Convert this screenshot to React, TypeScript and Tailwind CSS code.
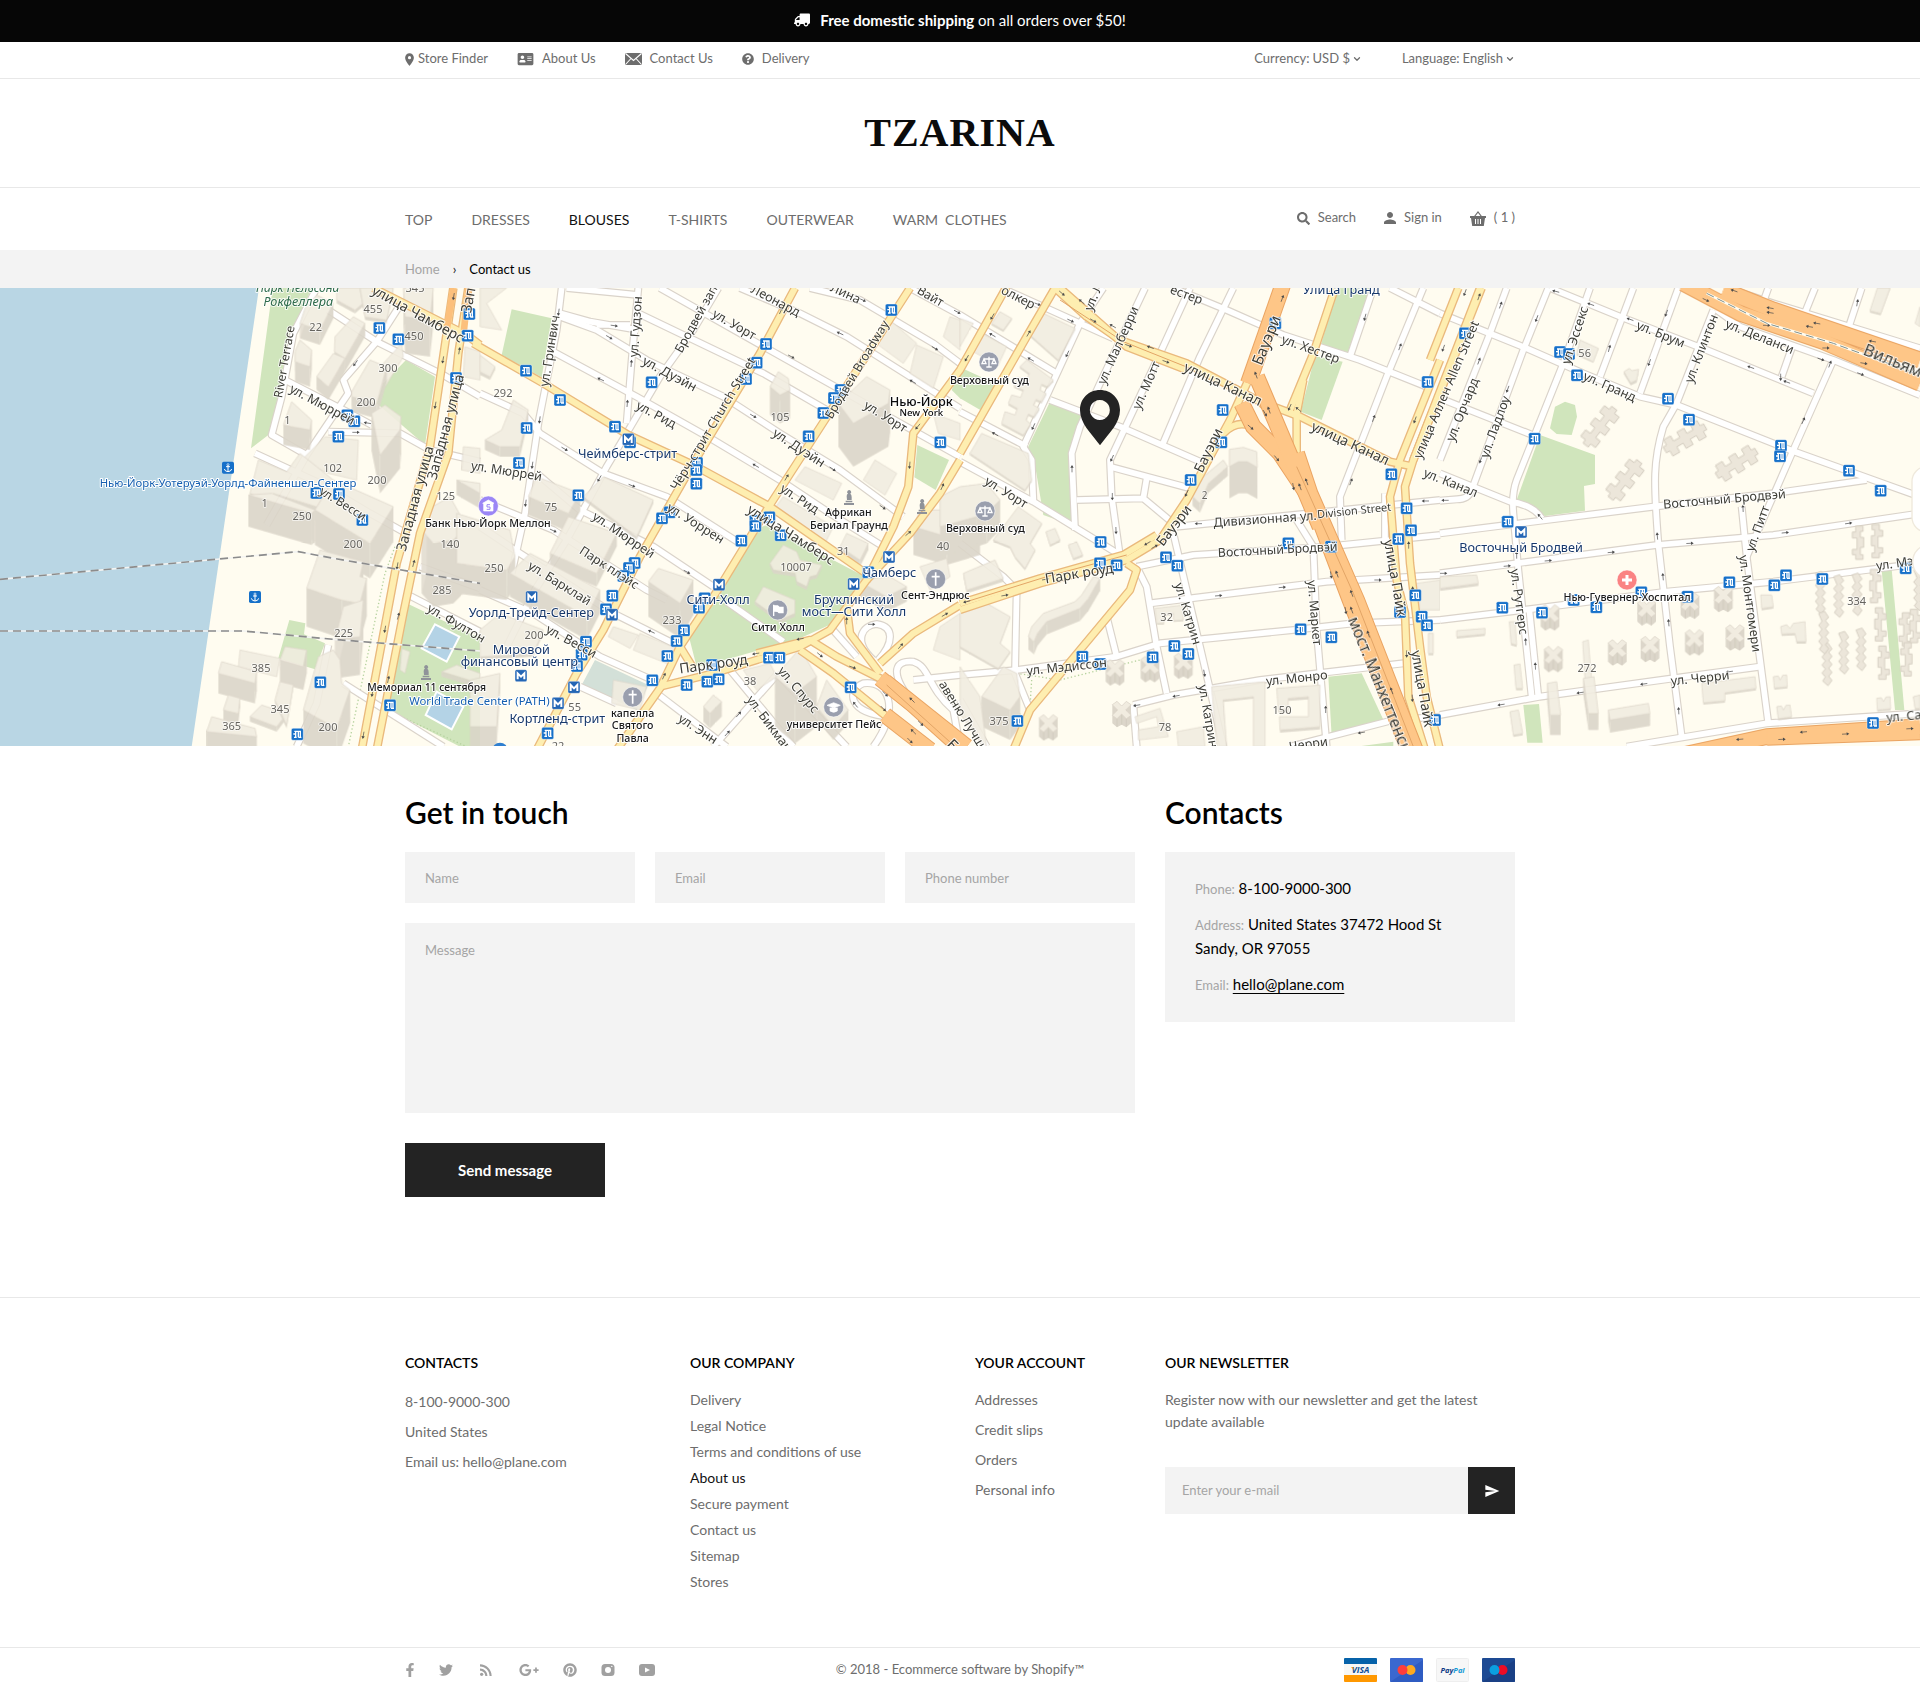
import type { ReactNode } from "react";
import { ChevronDown } from "lucide-react";
import {
  FaAddressCard,
  FaFacebookF,
  FaGooglePlusG,
  FaPinterest,
  FaQuestionCircle,
  FaSearch,
  FaTruck,
  FaTwitter,
} from "react-icons/fa";
import { MdLocationOn, MdPerson, MdRssFeed, MdSend } from "react-icons/md";

/* ------------------------------------------------------------------ */
/* Map data. One tile is 1440 units wide, four tiles make the strip.   */
/* ------------------------------------------------------------------ */

type Label = [x: number, y: number, angle: number, size: number, text: string, kind?: string];
type Arrow = [x: number, y: number, angle: number];

interface Tile {
  greens: string[];
  buildings: [points: string, height: number][];
  minor: string[];
  yellow: string[];
  orange: string[];
  stops: [number, number][];
  metro: [number, number][];
  arrows: Arrow[];
  labels: Label[];
}

const tiles: Tile[] = [
  {
    greens: [
      "818,24 935,24 880,150 830,370 805,465 753,505",
      "1218,240 1305,290 1275,495 1130,370 1150,310",
      "868,1020 916,1030 912,1063 975,1090 945,1168 835,1135",
      "1220,970 1440,1075 1440,1400 1380,1400 1165,1290 1180,1130",
    ],
    buildings: [
      ["1010,24 1100,24 1100,60 1065,90 1010,60", 10],
      ["915,85 950,45 1000,70 960,150 900,130", 45],
      ["1005,170 1060,110 1095,130 1035,235 1003,215", 40],
      ["950,290 1000,220 1035,235 985,320", 40],
      ["885,215 900,180 935,210 930,260 885,245", 60],
      ["1080,24 1180,24 1160,120 1095,110", 10],
      ["1210,24 1300,24 1290,120 1215,110", 110],
      ["1150,250 1205,190 1210,230 1150,330 1115,320", 0],
      ["1055,335 1110,240 1160,260 1130,370 1055,350", 45],
      ["1115,400 1155,375 1203,410 1200,450 1140,525", 115],
      ["850,435 875,365 935,420 930,450", 60],
      ["905,540 975,470 1075,480 1070,600 985,580", 0],
      ["750,640 775,540 860,575 900,520 1000,600 950,680 820,640 800,660", 45],
      ["745,645 815,640 945,690 935,700", 95],
      ["945,690 1000,600 1180,680 1110,790", 105],
      ["920,925 960,810 1090,845 1080,890 1100,895 1080,970 1025,960", 115],
      ["1030,980 1090,960 1080,1070 1005,1080", 115],
      ["720,1110 840,1135 830,1190 715,1160", 0],
      ["655,1180 665,1145 770,1175 765,1210", 60],
      ["840,1140 855,1100 920,1110 910,1160", 70],
      ["670,1290 685,1245 720,1255 715,1300", 30],
      ["750,1310 785,1275 860,1300 830,1340", 15],
      ["825,1260 840,1205 880,1215 860,1335", 10],
      ["620,1355 635,1310 765,1345 770,1370", 50],
      ["910,1290 955,1130 1000,1110 1020,1140 1025,1210 1050,1230 1010,1345", 100],
      ["1280,690 1350,650 1400,740 1360,780 1300,790 1265,750", 190],
      ["1370,600 1440,610 1440,640", 45],
      ["1390,500 1440,505 1440,580 1385,570", 0],
      ["1395,200 1440,215 1440,300 1390,290", 0],
      ["1325,1175 1370,1155 1440,1180 1440,1210", 15],
      ["1205,1105 1230,1115 1215,1180 1200,1170", 0],
    ],
    minor: [
      "M950,24 L880,160 L845,350 L815,465 L920,525",
      "M985,90 L1130,185 L1330,285 L1440,350",
      "M1210,60 L1130,185 L1030,300 L1045,340 L920,525 L800,735",
      "M855,300 L1050,400 L1115,435",
      "M985,455 L1200,460 L1290,510 L1440,545",
      "M765,520 L960,610 L1110,700 L1210,755",
      "M1225,945 L1440,1055",
      "M1260,860 L1440,925",
      "M1030,1210 L1330,1400",
      "M985,1095 L950,1270 L890,1400",
    ],
    yellow: [
      "M1360,24 L1290,500 L1190,850 L1085,1410",
      "M1405,24 L1375,220 L1345,520 L1260,760 L1210,1000 L1130,1410",
      "M1120,24 L1400,165 L1440,195",
    ],
    orange: [],
    stops: [[1138, 144], [1195, 178], [1408, 102], [1403, 167], [1368, 294], [1042, 406], [1063, 424], [1015, 470], [949, 639], [1017, 642], [1087, 720], [961, 1207], [1170, 1276], [892, 1363]],
    metro: [],
    arrows: [[1361, 50, 100], [1329, 240, 100], [1306, 376, 100], [1378, 212, -80], [1066, 250, 125], [1102, 429, 190], [1068, 457, 0], [1192, 858, 100], [1241, 850, -75], [1195, 1008, -75], [1155, 1048, 100], [1165, 1198, -78], [1117, 1240, 100], [1090, 1366, 100]],
    labels: [
      [893, 24, 0, 36, "Парк Нельсона", "park"],
      [895, 64, 0, 38, "Рокфеллера", "park"],
      [852, 245, -80, 36, "River Terrace"],
      [968, 372, 28, 38, "ул. Мюррей"],
      [1030, 670, 32, 36, "ул. Весси"],
      [1255, 100, 29, 42, "улица Чамберс"],
      [1335, 440, -75, 42, "Западная улица"],
      [1243, 655, -75, 42, "Западная улица"],
      [1402, 60, -80, 44, "Зап"],
      [684, 608, 0, 34, "Нью-Йорк-Уотеруэй-Уорлд-Файненшел-Сентер", "blue"],
      [1280, 1221, 0, 31, "Мемориал 11 сентября", "dark"],
      [1438, 1262, 0, 34, "World Trade Center (PATH)", "blue"],
      [1370, 1028, 30, 38, "ул. Фултон"],
      [947, 139, 0, 33, "22", "num"], [1119, 87, 0, 33, "455", "num"], [1242, 167, 0, 33, "450", "num"],
      [1245, 24, 0, 33, "345", "num"], [1164, 264, 0, 33, "300", "num"], [1098, 363, 0, 33, "200", "num"],
      [862, 418, 0, 33, "1", "num"], [998, 564, 0, 33, "102", "num"], [1131, 600, 0, 33, "200", "num"],
      [794, 669, 0, 33, "1", "num"], [906, 708, 0, 33, "250", "num"], [1059, 792, 0, 33, "200", "num"],
      [1337, 648, 0, 33, "125", "num"], [1350, 792, 0, 33, "140", "num"], [1326, 930, 0, 33, "285", "num"],
      [1031, 1059, 0, 33, "225", "num"], [783, 1164, 0, 33, "385", "num"], [840, 1287, 0, 33, "345", "num"],
      [695, 1336, 0, 33, "365", "num"], [984, 1341, 0, 33, "200", "num"],
    ],
  },
  {
    greens: [
      "95,88 215,115 185,292 65,225",
      "820,750 860,735 1145,885 1165,900 1060,1030 960,1075 700,1150 650,1160 628,1075 700,960",
      "1312,495 1407,540 1367,630 1303,592",
    ],
    buildings: [
      ["0,24 80,24 20,70 65,150 0,140", 0],
      ["0,225 45,260 30,290 0,275", 10],
      ["15,480 65,450 100,360 145,390 120,500 60,500", 30],
      ["145,650 170,590 300,640 265,700", 55],
      ["310,650 370,590 520,660 470,770", 10],
      ["210,820 265,710 410,760 350,880", 40],
      ["-70,700 90,750 105,830 80,870 -70,850", 90],
      ["90,880 150,820 360,930 320,1010", 70],
      ["505,905 535,865 640,900 600,970", 105],
      ["400,1040 475,1065 450,1105 385,1070", 0],
      ["480,1060 590,1105 560,1150 460,1110", 0],
      ["0,1050 60,1000 190,1050 160,1120 0,1130", 10],
      ["-30,1200 60,1180 50,1340 -30,1340", 60],
      ["400,1200 500,1220 480,1290 395,1270", 0],
      ["870,320 895,275 925,295 930,330 900,345", 85],
      ["1075,370 1160,290 1230,330 1225,370 1120,430", 130],
      ["1175,180 1230,120 1310,190 1270,250", 0],
      ["1310,195 1390,230 1360,325 1290,280", 0],
      ["1390,170 1410,110 1440,120 1440,210", 0],
      ["1360,400 1440,430 1440,480 1375,460", 0],
      ["1150,600 1185,540 1250,580 1215,645", 0],
      ["945,600 975,560 1085,610 1060,660", 0],
      ["880,690 910,650 1060,740 1030,800", 0],
      ["1080,800 1100,760 1165,790 1140,840", 20],
      ["1300,740 1320,690 1500,690 1500,740 1400,770", 85],
      ["870,850 910,795 950,815 960,840 1025,855 1010,885 990,890 980,920 950,905 945,880 880,870", 10],
      ["825,965 850,920 945,960 945,1000 900,1020", 10],
      ["1130,900 1230,890 1280,920 1220,950", 45],
      ["885,1190 960,1105 1010,1190 945,1240", 150],
      ["790,1170 870,1150 890,1190 830,1230", 0],
      ["1010,1280 1040,1200 1105,1290 1060,1340", 40],
      ["670,1280 700,1245 725,1265 690,1300", 45],
      ["1320,860 1400,835 1410,890 1350,930", 0],
      ["1360,1110 1380,1040 1440,1000 1440,1140", 0],
    ],
    minor: [
      "M245,24 L230,150 L175,430 L150,600 L135,700 L95,880",
      "M475,24 L455,240 L440,430",
      "M715,24 L640,150 L540,290 L440,460 L380,560 L260,780 L165,930 L80,1100",
      "M240,100 L330,125 L475,150 M260,24 L475,45 M350,135 L450,135",
      "M540,24 L860,205 L1440,530",
      "M780,24 L960,100 L1100,170 L1290,290 L1440,385",
      "M990,24 L1140,60 L1360,190 L1440,250",
      "M1290,24 L1440,105",
      "M475,100 L850,280 L1040,390",
      "M240,110 L350,150 L500,240 L730,350 L900,460 L1080,570 L1270,710",
      "M220,215 L470,350 L700,480 L900,600 L1050,700 L1210,800",
      "M0,340 L130,400 L180,460 L370,580 L560,650 L780,790",
      "M170,580 L300,690 L520,800 L700,920",
      "M0,660 L220,750 L500,930 L560,960",
      "M0,740 L120,820 L400,1000 L600,1100",
      "M0,930 L160,1000 L360,1130 L540,1210",
      "M300,1220 L410,1270",
      "M530,1240 L740,1400",
      "M750,1170 L940,1400",
      "M890,1180 L1100,1400",
      "M890,1185 L700,1400",
      "M740,965 L910,1085",
      "M1050,1040 L1130,1130",
      "M1180,1140 C1115,1080 1150,1035 1190,1032 C1245,1040 1240,1090 1195,1140",
      "M1300,1270 C1220,1170 1250,1140 1300,1145 C1350,1160 1340,1220 1420,1290 L1440,1400",
      "M1300,1200 L1440,1185",
      "M1230,1310 C1100,1300 1100,1230 1150,1210 C1230,1200 1260,1290 1180,1400",
    ],
    yellow: [
      "M-20,190 L190,310 L445,465 L640,555 L870,680 L1165,885",
      "M1290,24 L860,690 L720,920 L600,1100 L540,1225 L410,1410",
      "M945,24 L840,220 L640,550 L480,830 L370,1050 L290,1180 L170,1410",
      "M600,1100 L640,1165",
      "M540,1220 L700,1180 L960,1100 L1050,1050 L1160,900 L1240,740 L1285,620 L1300,460 L1440,270 L1580,20",
      "M1160,900 L1290,760 L1380,640 L1440,540",
      "M830,1120 L990,1080 L1070,1130 L1210,1200",
      "M960,1110 L1060,1180 L1220,1310",
      "M1100,980 L1110,1060 L1200,1180",
      "M1200,1150 L1300,1060 L1440,975",
    ],
    orange: ["M1200,1195 L1300,1275 L1450,1410", "M1215,1205 L1460,1400", "M1215,1305 L1350,1410"],
    stops: [[138, 272], [240, 360], [140, 444], [405, 440], [450, 487], [515, 307], [117, 549], [295, 646], [858, 192], [830, 248], [798, 297], [1234, 90], [1082, 330], [1062, 354], [1030, 399], [986, 469], [1381, 487], [651, 549], [649, 570], [649, 611], [569, 697], [546, 715], [784, 782], [826, 722], [826, 738], [868, 712], [902, 766], [464, 849], [447, 864], [430, 888], [397, 947], [378, 988], [674, 955], [657, 983], [612, 1051], [590, 1083], [562, 1128], [517, 1201], [620, 1215], [682, 1205], [716, 1198], [696, 1155], [867, 1133], [898, 1133], [1112, 1222], [318, 1085], [305, 1124], [291, 1158], [203, 1360], [1165, 877]],
    metro: [[445, 478], [717, 914], [1121, 912], [1227, 831], [155, 951], [396, 1004], [123, 1187], [282, 1222], [234, 1270]],
    arrows: [[236, 97, 98], [403, 137, 8], [388, 172, 30], [454, 250, -85], [442, 370, -85], [362, 298, 205], [179, 420, 98], [157, 556, 98], [137, 670, 98], [358, 596, 120], [254, 507, 30], [456, 617, 22], [903, 92, -65], [934, 230, 28], [820, 408, 30], [1058, 567, 33], [827, 557, 210], [920, 592, -60], [1080, 160, 205], [1148, 60, 25], [1365, 205, 30], [1298, 305, 210], [1432, 96, 28], [1313, 440, 130], [1289, 556, 95], [1387, 620, -65], [1208, 682, 35], [1285, 760, -40], [220, 752, 25], [621, 876, 28], [514, 1055, 205], [960, 1077, 170], [827, 1121, 170], [1100, 1022, -90], [1175, 1033, 0], [1262, 1098, -50], [1395, 1004, -30], [1020, 1125, 40], [1118, 1162, 20], [1216, 1242, 45], [1296, 1260, -135], [1126, 1274, -130], [1210, 1286, 45], [1322, 1330, 45], [1300, 1355, -135], [1290, 1382, 45], [776, 1303, -48], [742, 1360, -48], [552, 1188, -65]],
    labels: [
      [207, 212, -81, 38, "ул. Гринвич"],
      [465, 140, -86, 38, "ул. Гудзон"],
      [650, 112, -61, 37, "Бродвей зап."],
      [764, 132, 30, 38, "ул. Уорт"],
      [888, 60, 28, 38, "Леонард"],
      [1098, 38, 25, 38, "Лина"],
      [1352, 48, 30, 37, "Вайт"],
      [570, 280, 28, 39, "ул. Дуэйн"],
      [530, 402, 28, 38, "ул. Рид"],
      [958, 502, 33, 39, "ул. Дуэйн"],
      [1218, 408, 32, 38, "ул. Уорт"],
      [960, 655, 33, 38, "ул. Рид"],
      [80, 571, 9, 38, "ул. Мюррей"],
      [648, 728, 32, 38, "ул. Уоррен"],
      [432, 763, 34, 38, "ул. Мюррей"],
      [388, 862, 33, 37, "Парк плэйс"],
      [240, 908, 32, 38, "ул. Барклай"],
      [275, 1082, 28, 38, "ул. Весси"],
      [655, 1345, 33, 38, "ул. Энн"],
      [870, 1330, 53, 38, "ул. Бикман"],
      [957, 1228, 50, 38, "ул. Спурс"],
      [1130, 268, -59, 37, "Бродвей Broadway"],
      [697, 430, -59, 38, "Чёрч-стрит Church Street"],
      [935, 762, 32, 41, "улица Чамберс"],
      [700, 1150, -8, 42, "Парк роуд"],
      [1475, 1450, 45, 46, "Бруклин"],
      [443, 520, 0, 38, "Чеймберс-стрит", "metro"],
      [714, 958, 0, 38, "Сити-Холл", "metro"],
      [1122, 958, 0, 38, "Бруклинский", "metro"],
      [1122, 994, 0, 38, "мост—Сити Холл", "metro"],
      [1228, 877, 0, 38, "Чамберс", "metro"],
      [154, 996, 0, 38, "Уорлд-Трейд-Сентер", "metro"],
      [124, 1107, 0, 38, "Мировой", "metro"],
      [118, 1143, 0, 38, "финансовый центр", "metro"],
      [232, 1314, 0, 38, "Кортленд-стрит", "metro"],
      [1324, 364, 0, 38, "Нью-Йорк", "city"],
      [1324, 398, 0, 29, "New York", "city"],
      [1105, 696, 0, 32, "Африкан", "dark"],
      [1107, 734, 0, 32, "Бериал Граунд", "dark"],
      [894, 1042, 0, 32, "Сити Холл", "dark"],
      [1366, 946, 0, 32, "Сент-Эндрюс", "dark"],
      [458, 1299, 0, 32, "капелла", "dark"],
      [458, 1336, 0, 32, "Святого", "dark"],
      [458, 1374, 0, 32, "Павла", "dark"],
      [1062, 1333, 0, 32, "университет Пейс", "dark"],
      [24, 729, 0, 32, "Банк Нью-Йорк Меллон", "dark"],
      [69, 337, 0, 33, "292", "num"], [213, 681, 0, 33, "75", "num"], [42, 864, 0, 33, "250", "num"],
      [162, 1065, 0, 33, "200", "num"], [576, 1020, 0, 33, "233", "num"], [284, 1281, 0, 33, "55", "num"],
      [234, 1396, 0, 33, "22", "num"], [900, 409, 0, 33, "105", "num"], [1090, 813, 0, 33, "31", "num"],
      [948, 861, 0, 33, "10007", "num"], [810, 1203, 0, 33, "38", "num"], [1389, 796, 0, 33, "40", "num"],
    ],
  },
  {
    greens: [
      "-25,330 0,262 105,310 70,395 0,355",
      "270,365 368,395 325,520 335,735 250,705 225,555 200,510",
      "1130,24 1230,24 1160,228 1080,205",
      "1065,228 1148,245 1085,420 1022,395",
      "1105,1190 1205,1180 1275,1330 1115,1370",
      "1190,1400 1300,1385 1300,1400",
    ],
    buildings: [
      ["0,115 40,130 0,200", 0],
      ["95,130 120,95 155,115 130,150", 6],
      ["205,160 240,95 345,145 295,240", 6],
      ["30,210 65,160 140,200 115,255", 0],
      ["180,260 200,240 280,300 262,320 245,312 240,330 258,340 245,365 228,358 220,375 238,385 222,410 205,402 198,420 212,432 190,465 125,430 135,395 165,405 172,385 145,370 155,345 182,352 190,330 162,318 172,292 200,300 208,280", 6],
      ["30,520 65,460 205,520 215,600 195,630", 6],
      ["-60,650 0,620 80,610 120,660 80,700 50,710 -60,740", 90],
      ["100,780 175,680 245,730 210,790 225,810 195,865 165,830 150,800", 6],
      ["10,880 105,840 130,895 20,930", 10],
      ["258,755 285,745 300,780 270,795", 6],
      ["325,795 350,785 368,825 340,835", 6],
      ["205,1070 215,1040 250,1000 345,965 365,945 400,890 420,895 385,955 360,985 260,1025 232,1060 222,1085", 38],
      ["0,1000 80,970 150,1010 120,1090 150,1115 115,1165 0,1100", 6],
      ["698,650 730,590 790,540 803,560 745,610 720,670", 28],
      ["808,508 850,502 890,515 892,562 862,545 835,545 808,560", 95],
      ["585,985 670,975 670,1020 640,1022 640,1000 612,1005 612,1030 590,1030", 4],
      ["755,1220 915,1205 915,1400 880,1400 880,1250 790,1260 800,1400 770,1400", 6],
      ["950,1225 1080,1215 1080,1340 960,1350 958,1310 1045,1310 1045,1250 985,1255 985,1290 955,1290", 8],
      ["525,1310 600,1285 625,1370 535,1380 535,1350 595,1340 590,1310 530,1330", 0],
      ["650,1355 730,1340 735,1400 655,1400", 0],
      ["65,1250 130,1160 170,1180 180,1250 150,1290", 90],
      ["0,1160 60,1250 80,1400 40,1360 0,1300", 0],
      ["1370,910 1440,900 1440,990 1380,990", 0],
      ["1405,1060 1420,1060 1420,1120 1405,1120", 6],
    ],
    minor: [
      "M0,105 L290,280",
      "M125,24 L360,130 L460,175",
      "M430,24 L360,130 L190,500 L215,540 L220,660",
      "M555,24 L420,310 L360,440 L335,520 L345,750",
      "M690,24 L600,220 L450,540 L455,650 L480,830",
      "M820,24 L720,230 L605,500",
      "M0,395 L200,500",
      "M270,360 L480,440 L720,545",
      "M450,560 L690,625",
      "M350,660 L550,655 L640,730 M560,595 L550,655",
      "M0,545 L220,665 L480,825",
      "M640,24 L800,90 L970,165 L1200,240 L1400,320",
      "M650,740 L1050,700 L1440,660",
      "M530,860 L700,825 L1100,800 L1440,765",
      "M570,970 L1100,905 L1440,885",
      "M0,1185 L170,1170 L470,1130 L600,1090 L1000,1050 L1180,1030 L1440,1020",
      "M520,1275 L640,1245 L900,1200 L1330,1150",
      "M990,1400 L1300,1320 L1440,1310",
      "M640,760 L720,1100 L790,1400",
      "M530,860 L560,920 L590,1100 L620,1240",
      "M520,1275 L530,1400",
      "M1010,720 L1060,800 L1070,1050 L1100,1400",
      "M1390,24 L1280,290 L1140,650 L1145,780",
      "M1240,24 L1170,230",
      "M1290,24 L1440,100",
      "M440,1010 L470,1130",
      "M0,790 L130,890 L170,930 L165,1180 L210,1290",
      "M0,1260 L80,1400",
      "M1275,640 L1275,780",
    ],
    yellow: [
      "M0,520 L200,170 L285,24",
      "M285,24 L380,110 L480,180 L680,250 L900,365 L1020,410 L1290,545 L1360,560",
      "M300,24 L500,200 L680,270",
      "M0,990 L240,910 L500,840 L600,780 L680,660 L810,420 L870,290",
      "M0,970 L240,895 L490,825 L590,765",
      "M1125,24 L1060,220 L990,390",
      "M1030,300 L1010,400 L1010,520",
      "M790,460 Q840,410 890,450",
      "M900,365 Q940,400 960,430",
      "M500,850 L530,870 L510,930 L210,1290 L160,1410",
      "M1440,240 L1320,540 L1290,650 L1310,900 L1335,1000 L1345,1250 L1395,1410",
      "M1560,24 L1360,540 L1335,620 L1350,850 L1380,1100 L1400,1250 L1440,1410",
    ],
    orange: [
      "M970,10 L865,310",
      "M845,370 L880,440 L960,520 L1060,670 L1170,960 L1350,1420",
      "M890,290 L1000,550 L1080,740",
      "M1010,520 L1050,640 L1190,960 L1370,1420",
    ],
    stops: [[946, 130], [788, 390], [784, 487], [692, 600], [422, 786], [420, 850], [470, 856], [618, 832], [652, 857], [985, 790], [1113, 800], [1403, 306], [1294, 583], [1340, 685], [1353, 751], [1315, 777], [1366, 946], [1385, 1010], [1401, 1036], [1320, 996], [1022, 1048], [1114, 1072], [643, 1098], [685, 1122], [578, 1132], [367, 1130], [421, 1152], [172, 1323], [1425, 1320]],
    metro: [],
    arrows: [[97, 110, 120], [20, 235, 120], [97, 165, 210], [232, 72, 20], [306, 40, 40], [332, 122, 25], [365, 65, -140], [206, 160, -60], [212, 238, 210], [322, 222, 115], [400, 122, 30], [458, 138, 210], [506, 197, 20], [571, 202, 200], [618, 245, 20], [220, 440, 115], [105, 462, 210], [336, 566, -90], [456, 535, 115], [457, 650, 90], [468, 752, 88], [967, 55, -70], [888, 285, -110], [927, 390, -110], [915, 400, 60], [872, 442, 40], [950, 535, 50], [989, 382, 115], [1015, 388, -140], [1000, 620, 80], [1020, 620, -110], [1040, 605, -110], [715, 731, 180], [680, 640, 115], [562, 790, 150], [584, 800, -30], [776, 947, -5], [967, 922, -5], [1254, 900, 0], [1113, 885, 80], [1131, 882, -110], [1175, 940, -110], [1157, 992, 80], [1175, 990, -110], [1225, 1062, -110], [1295, 1232, -110], [1241, 415, -70], [1173, 605, -70], [1320, 200, -70], [1215, 112, 105], [1365, 420, 110], [1346, 795, -90], [1340, 1122, 90], [1357, 1255, 88], [1358, 930, -90], [733, 1180, 80], [648, 1248, 170], [530, 1276, 170], [1097, 1288, -90], [1204, 1358, 170], [135, 946, -10], [20, 965, 165], [257, 898, -10], [1396, 663, 180]],
    labels: [
      [176, 50, 27, 38, "олкер"],
      [398, 50, -68, 38, "ул. Л"],
      [472, 195, -66, 38, "ул. Малберри"],
      [557, 315, -66, 38, "ул. Мотт"],
      [680, 42, 20, 38, "естер"],
      [1053, 205, 20, 38, "ул. Хестер"],
      [790, 310, 25, 42, "улица Канал"],
      [1172, 488, 25, 42, "улица Канал"],
      [917, 180, -68, 46, "Бауэри"],
      [743, 510, -64, 42, "Бауэри"],
      [640, 735, -52, 42, "Бауэри"],
      [1457, 328, -67, 38, "улица Аллен Allen Street"],
      [140, 635, 32, 38, "ул. Уорт"],
      [915, 715, -4, 38, "Дивизионная ул."],
      [1182, 690, -6, 33, "Division Street"],
      [953, 808, -3, 37, "Восточный Бродвэй"],
      [357, 878, -9, 42, "Парк роуд"],
      [320, 1158, -6, 38, "ул. Мэдиссон"],
      [686, 1000, 73, 38, "ул. Катрин"],
      [747, 1308, 80, 38, "ул. Катрин"],
      [1066, 998, 85, 38, "ул. Маркет"],
      [1010, 1192, -6, 38, "ул. Монро"],
      [1045, 1390, -8, 38, "Черри"],
      [1308, 893, 80, 42, "улица Пайк"],
      [1390, 1225, 80, 42, "улица Пайк"],
      [1272, 1240, 68, 48, "мост. Манхеттенский"],
      [20, 1320, 58, 38, "авеню Лучшая"],
      [1144, 28, 0, 38, "Улица Гранд", "metro"],
      [88, 299, 0, 32, "Верховный суд", "dark"],
      [76, 745, 0, 32, "Верховный суд", "dark"],
      [734, 645, 0, 30, "2", "num"], [620, 1011, 0, 33, "32", "num"], [117, 1320, 0, 33, "375", "num"],
      [615, 1341, 0, 33, "78", "num"], [966, 1290, 0, 33, "150", "num"],
    ],
  },
  {
    greens: [
      "300,465 465,525 465,612 432,618 435,692 315,708 230,660",
      "345,380 375,365 405,375 411,410 395,465 350,462 330,445",
      "250,1275 297,1272 308,1388 262,1388",
      "1325,870 1355,868 1393,1290 1365,1290",
    ],
    buildings: [
      ["0,890 110,885 115,910 0,925", 8],
      ["50,1052 135,1045 135,1062 50,1070", 6],
      ["208,1025 225,1025 230,1095 213,1090", 6],
      ["222,1155 240,1152 248,1225 228,1225", 6],
      ["210,1295 235,1290 248,1360 220,1365", 6],
      ["322,1210 350,1205 362,1305 330,1305", 60],
      ["428,1085 445,1080 455,1200 435,1200", 0],
      ["430,1195 462,1190 475,1300 445,1300", 50],
      ["505,1290 625,1270 630,1300 510,1320", 38],
      ["785,1210 945,1190 948,1225 855,1238 855,1262 790,1268", 6],
      ["962,945 995,945 1000,980 965,985", 6],
      ["1022,1040 1040,1034 1050,1045 1060,1030 1095,1025 1098,1085 1070,1085 1065,1060 1025,1062", 6],
      ["552,275 568,265 575,272 596,268 590,300 572,308", 8],
      ["420,180 475,205 460,245 410,222", 4],
      ["1312,24 1350,24 1322,100 1290,92", 6],
      ["1440,80 1425,130 1440,140", 0],
      ["1000,1190 1015,1188 1020,1200 1028,1186 1040,1185 1042,1220 1003,1224", 5],
      ["1010,1280 1024,1278 1030,1290 1038,1276 1050,1275 1055,1310 1015,1316", 5],
      ["1310,1255 1324,1253 1330,1265 1338,1251 1350,1250 1352,1286 1312,1290", 5],
      ["1420,1250 1440,1245 1440,1285 1425,1285", 5],
    ],
    minor: [
      "M0,100 L260,205 L430,280 L600,350 L710,375 L1050,510 L1300,600 L1440,650",
      "M330,24 L540,110 L800,210 L1120,340",
      "M0,355 L290,470",
      "M200,24 L150,160 L0,540",
      "M325,24 L250,210 L95,630 Q85,658 50,658 L0,662",
      "M450,24 L370,250 L230,600 Q215,640 220,700 L235,870 L275,1250",
      "M268,990 L295,1250",
      "M580,24 L480,290",
      "M715,24 L600,340",
      "M820,90 L710,370 L670,440 C640,540 640,600 655,790 L690,1100 L725,1370",
      "M1180,240 L1060,510 L920,830",
      "M905,680 L920,830 L985,1330",
      "M0,760 L640,680 L1000,640 L1280,600",
      "M0,580 L210,665 Q280,675 305,715",
      "M0,880 L650,795 L1000,765 L1440,700",
      "M0,1020 L290,985 L680,935 L1000,905 L1440,850",
      "M0,1305 L300,1250 L700,1195 L960,1160",
      "M560,1400 L980,1330 L1440,1300",
      "M860,24 L1000,70 L1440,205",
      "M830,90 L900,140 L1180,240 L1440,345",
      "M1060,190 L1025,290",
      "M985,24 L970,65",
      "M1125,24 L1090,110",
      "M1265,24 L1220,160",
    ],
    yellow: ["M55,24 L-30,240", "M125,24 L-80,540"],
    orange: [
      "M850,30 L1000,90 L1440,240",
      "M730,10 L900,100 L1150,185 L1440,310",
      "M680,1435 L980,1370 L1440,1340",
      "M980,1372 L1440,1356",
    ],
    stops: [[75, 160], [360, 216], [387, 222], [411, 286], [684, 356], [747, 419], [284, 476], [1023, 497], [1020, 529], [1227, 572], [1322, 632], [203, 725], [187, 983], [306, 998], [401, 960], [469, 982], [604, 937], [743, 950], [868, 907], [1003, 916], [1038, 886], [1147, 897], [1397, 865], [1299, 1329]],
    metro: [[243, 756]],
    arrows: [[75, 38, 110], [117, 50, -70], [182, 75, -70], [10, 205, 110], [117, 243, -70], [290, 116, 110], [203, 328, 110], [122, 540, 110], [347, 34, 195], [452, 73, 200], [570, 118, 200], [508, 205, -75], [628, 248, 110], [679, 100, 110], [932, 262, 200], [1040, 306, 200], [1022, 292, 90], [1090, 422, -65], [1170, 252, -70], [798, 60, 25], [882, 32, 200], [980, 136, 0], [990, 84, 190], [990, 98, 190], [1108, 140, 190], [1130, 130, 190], [1158, 204, 0], [1143, 238, 20], [1262, 282, 20], [1272, 250, 10], [1297, 184, 190], [1252, 68, -80], [15, 661, 180], [300, 710, -130], [230, 825, -90], [11, 880, 0], [202, 858, -5], [325, 842, -5], [514, 817, -5], [750, 790, -3], [1036, 758, -6], [1226, 730, -8], [652, 768, -95], [669, 890, -95], [686, 1028, -95], [716, 1292, -93], [909, 685, -93], [257, 1085, -93], [286, 1158, -93], [183, 1274, 172], [420, 1238, 172], [611, 1212, 172], [868, 1175, 172], [899, 1378, 175], [1026, 1378, -3], [1090, 1356, 175], [1217, 1362, -3], [1410, 1346, -3]],
    labels: [
      [65, 388, -68, 38, "ул. Орчард"],
      [163, 440, -70, 38, "ул. Ладлоу"],
      [403, 165, -72, 38, "ул. Эссекс"],
      [510, 318, 24, 38, "ул. Гранд"],
      [663, 160, 22, 38, "ул. Брум"],
      [782, 205, -69, 38, "ул. Клинтон"],
      [960, 168, 22, 38, "ул. Деланси"],
      [1385, 250, 22, 50, "Вильямсб"],
      [33, 606, 22, 38, "ул. Канал"],
      [853, 655, -5, 38, "Восточный Бродвэй"],
      [952, 745, -70, 37, "ул. Питт"],
      [932, 970, 82, 38, "ул. Монтгомери"],
      [240, 965, 82, 38, "ул. Рутгерс"],
      [780, 1192, -6, 38, "ул. Черри"],
      [1364, 848, -8, 38, "ул. Мэ"],
      [1410, 1305, -5, 38, "ул. Саут"],
      [243, 802, 0, 38, "Восточный Бродвей", "metro"],
      [561, 951, 0, 32, "Нью-Гувернер-Хоспитал", "dark"],
      [434, 217, 0, 33, "56", "num"], [441, 1162, 0, 33, "272", "num"], [1250, 961, 0, 33, "334", "num"],
    ],
  },
];

// small towers seen from above, in strip coordinates
const crossTowers = [
  [4650, 1000], [4660, 1125], [4852, 1105], [4950, 1095], [4940, 985], [5070, 965],
  [5083, 1075], [5170, 945], [5205, 1060], [3345, 1165], [3450, 1155], [3550, 1145], [3365, 1290], [3145, 1330],
];
const plusBlocks = [[4800, 440, -52], [4875, 600, -52], [5055, 475, -30], [5210, 550, -32]];
const sawBlocks = [[5460, 940], [5515, 950], [5570, 945], [5530, 1120], [5582, 1110], [5480, 1155], [5470, 1060], [5755, 930]];
const hookBlocks = [[5575, 790, 1], [5630, 785, -1], [5625, 920, -1], [5640, 1035, -1], [5715, 1050, 1], [5650, 1150, -1], [5720, 1140, 1], [5745, 1040, -1]];

const labelStyles: Record<string, string> = {
  street: "fill-[#3d3d36] stroke-white/80",
  num: "fill-[#66645f] stroke-white/60",
  dark: "fill-[#1a1a1a] stroke-white font-medium",
  city: "fill-[#0a0a0a] stroke-white font-medium",
  metro: "fill-[#17386b] stroke-white/90",
  blue: "fill-[#155fb0] stroke-white",
  park: "fill-[#2f6b4c] stroke-white/80 italic",
};

function Building({ points, height }: { points: string; height: number }) {
  const pts = points.split(" ").map((p) => p.split(",").map(Number));
  return (
    <g className="stroke-[#d9d2c5] stroke-2" strokeLinejoin="round">
      {height > 0 &&
        pts.map(([x, y], i) => {
          const [nx, ny] = pts[(i + 1) % pts.length];
          return (
            <polygon
              key={i}
              points={`${x},${y} ${nx},${ny} ${nx},${ny + height} ${x},${y + height}`}
              className={nx > x ? "fill-[#e3ddd1] stroke-none" : "fill-[#dbd5c9] stroke-none"}
            />
          );
        })}
      <polygon points={points} className="fill-[#f1ece0]" />
    </g>
  );
}

function TileLayer({ render }: { render: (tile: Tile) => ReactNode }) {
  return (
    <>
      {tiles.map((tile, i) => (
        <g key={i} transform={`translate(${i * 1440} 0)`}>
          {render(tile)}
        </g>
      ))}
    </>
  );
}

function Roads({ kind, className }: { kind: "minor" | "yellow" | "orange"; className: string }) {
  return (
    <g fill="none" strokeLinejoin="round" className={className}>
      <TileLayer render={(tile) => tile[kind].map((d) => <path key={d} d={d} />)} />
    </g>
  );
}

function Poi({ x, y, color = "#9a9fae", children }: { x: number; y: number; color?: string; children: ReactNode }) {
  return (
    <g transform={`translate(${x} ${y})`}>
      <circle r="30" fill={color} stroke="#ffffff" strokeOpacity="0.5" strokeWidth="3" />
      <g fill="none" stroke="#ffffff" strokeWidth="4">
        {children}
      </g>
    </g>
  );
}

function StoreMap() {
  return (
    <section aria-label="Store location" className="relative overflow-hidden">
      <svg viewBox="0 24 5760 1374" preserveAspectRatio="xMidYMid slice" className="block h-[458px] w-full font-['Noto_Sans',sans-serif]">
        <defs>
          <g id="stop">
            <rect x="-18" y="-18" width="36" height="36" rx="5" fill="#1670c9" stroke="#ffffff" strokeOpacity="0.6" strokeWidth="2" />
            <path d="M-9,-9 H11 M-5,-9 V2 M-12,-1 H-3 M-10,9 H-2 M-5,2 V9 M3,-9 V9 M3,9 H12 M9,-9 V9" fill="none" stroke="#ffffff" strokeWidth="4" />
          </g>
          <g id="metro">
            <rect x="-18" y="-18" width="36" height="36" rx="5" fill="#2466b5" stroke="#ffffff" strokeOpacity="0.6" strokeWidth="2" />
            <path d="M-10,11 V-7 L0,3 L10,-7 V11" fill="none" stroke="#ffffff" strokeWidth="6" />
          </g>
          <g id="anchor">
            <rect x="-18" y="-18" width="36" height="36" rx="5" fill="#1670c9" />
            <path d="M0,-6 V12 M-6,-3 H6 M-11,4 Q-9,12 0,12 Q9,12 11,4" fill="none" stroke="#ffffff" strokeWidth="3" />
            <circle cy="-9" r="3" fill="none" stroke="#ffffff" strokeWidth="2" />
          </g>
          <g id="arrow" stroke="#4b4b4b" fill="#4b4b4b">
            <path d="M-11,0 H6" strokeWidth="2" />
            <path d="M11,0 L3,-5 V5 Z" stroke="none" />
          </g>
          <g id="scales">
            <path d="M0,-16 V14 M-8,15 H8 M-17,-9 H17 M-15,-9 L-21,5 H-9 Z M15,-9 L9,5 H21 Z" />
          </g>
          <g id="cross">
            <path d="M0,-20 V20 M-12,-7 H12" strokeWidth="5" />
          </g>
          <g id="monument" fill="#8f9299">
            <path d="M-15,14 H15 V20 H-15 Z M-10,7 H10 V12 H-10 Z M-7,-6 Q-7,-14 -3,-14 A6,6 0 1 1 4,-14 Q8,-12 8,-4 V5 H-6 Z" />
          </g>
          <g id="tower">
            <path d="M-28,-16 L-14,-26 L0,-12 L14,-26 L28,-16 L28,40 L14,52 L0,44 L-14,52 L-28,40 Z" fill="#dcd6ca" />
            <path d="M-14,0 V50 M14,0 V50 M0,0 V44" stroke="#cfc8bb" strokeWidth="2" />
            <path d="M-28,-16 L-14,-26 L0,-12 L14,-26 L28,-16 L12,0 L28,16 L14,26 L0,12 L-14,26 L-28,16 L-12,0 Z" fill="#f1ece0" stroke="#dcd5c8" strokeWidth="2" />
          </g>
          <path
            id="plus"
            d="M-70,-10 H-58 V-28 H-34 V-10 H-12 V-28 H12 V-10 H34 V-28 H58 V-10 H70 V10 H58 V28 H34 V10 H12 V28 H-12 V10 H-34 V28 H-58 V10 H-70 Z"
          />
          <path id="saw" d="M-14,-60 L4,-66 L16,-48 L6,-38 L16,-26 L6,-14 L16,-2 L6,10 L16,22 L6,34 L16,46 L4,62 L-12,48 L-4,36 L-14,24 L-4,12 L-14,0 L-4,-12 L-14,-24 L-4,-36 Z" />
          <path id="hook" d="M-8,-52 H14 V-36 H6 V-18 H16 V12 H6 V34 H14 V48 H-8 V34 H-18 V18 H-4 V-16 H-18 V-34 H-8 Z" />
        </defs>

        <rect y="24" width="5760" height="1374" fill="#fffcf0" />
        <polygon points="0,24 777,24 575,1400 0,1400" fill="#b9d6e4" />

        <TileLayer render={(tile) => tile.greens.map((g) => <polygon key={g} points={g} className="fill-[#d0e5bc]" />)} />
        <polygon points="1785,1140 1945,1215 1910,1290 1745,1215" fill="#d3e0d8" />
        <g fill="#b4d3e6" stroke="#ffffff" strokeWidth="6">
          <polygon points="1305,1033 1378,1070 1340,1145 1265,1105" />
          <polygon points="1310,1235 1390,1280 1355,1348 1277,1305" />
        </g>

        {/* Footpaths */}
        <path
          d="M1185,800 L1155,880 L1045,1400 M1230,950 L1440,1060 M3050,1180 L3180,1200 L3420,1140 M3095,1200 L3090,1280 M1160,1290 L1400,1400 M3060,1300 L3050,1400"
          fill="none"
          stroke="#b7d3a0"
          strokeWidth="4"
          strokeDasharray="4 7"
        />

        <Roads kind="minor" className="stroke-[#dad3ca] stroke-[24]" />
        <Roads kind="minor" className="stroke-white stroke-[17]" />
        <g opacity="0.9">
          <TileLayer render={(tile) => tile.buildings.map(([p, h]) => <Building key={p} points={p} height={h} />)} />
        </g>
        <g fill="#ece6da" stroke="#d6cfc2" strokeWidth="3">
          {plusBlocks.map(([x, y, a]) => <use key={x} href="#plus" transform={`translate(${x} ${y}) rotate(${a})`} />)}
          {sawBlocks.map(([x, y]) => <use key={x} href="#saw" x={x} y={y} />)}
          {hookBlocks.map(([x, y, s]) => <use key={x} href="#hook" transform={`translate(${x} ${y}) scale(${s} 1)`} />)}
        </g>
        {crossTowers.map(([x, y]) => <use key={x} href="#tower" x={x} y={y} />)}

        <Roads kind="yellow" className="stroke-[#eab97c] stroke-[26]" />
        <Roads kind="yellow" className="stroke-[#feeeb0] stroke-[18]" />
        <Roads kind="orange" className="stroke-[#eaa462] stroke-[50]" />
        <Roads kind="orange" className="stroke-[#fec687] stroke-[44]" />
        <path d="M1360,24 L1340,150 M1405,24 L1392,150" stroke="#fcc07c" strokeWidth="20" />
        <path
          d="M3180,60 L3370,185 L3570,265 M2900,965 L3140,890 L3380,825 M3890,560 L4060,940 L4240,1400 M2660,1215 L2860,1395"
          fill="none"
          stroke="#e3a566"
          strokeWidth="3"
        />
        <path d="M5120,40 L5300,130 L5500,190 L5760,285" fill="none" stroke="#fffcf0" strokeWidth="8" />
        <path d="M5120,40 L5300,130 L5500,190 L5760,285" fill="none" stroke="#7f8f8b" strokeWidth="3" strokeDasharray="24 12" />

        {/* Ferry lines */}
        <g fill="none">
          <path d="M0,898 L895,815 L1000,835 L1440,910 M0,1053 L730,1053 L1000,1078 L1440,1113" stroke="#f4f4f2" strokeWidth="5" />
          <path d="M0,898 L895,815 L1000,835 L1440,910 M0,1053 L730,1053 L1000,1078 L1440,1113" stroke="#8c8c8c" strokeWidth="5" strokeDasharray="24 15" />
        </g>

        <TileLayer render={(tile) => tile.arrows.map(([x, y, a], i) => <use key={i} href="#arrow" transform={`translate(${x} ${y}) rotate(${a})`} />)} />
        <TileLayer render={(tile) => tile.stops.map(([x, y], i) => <use key={i} href="#stop" x={x} y={y} />)} />
        <TileLayer render={(tile) => tile.metro.map(([x, y], i) => <use key={i} href="#metro" x={x} y={y} />)} />
        <use href="#anchor" x="684" y="563" />
        <use href="#anchor" x="765" y="951" />

        {/* Points of interest */}
        <Poi x={1898} y={1251}><use href="#cross" /></Poi>
        <Poi x={2807} y={897}><use href="#cross" /></Poi>
        <Poi x={2967} y={246}><use href="#scales" /></Poi>
        <Poi x={2955} y={693}><use href="#scales" /></Poi>
        <Poi x={2333} y={990}><path d="M-12,-16 V18 M-12,-13 L0,-12 L4,-8 H16 V8 H4 L0,4 L-12,3 Z" fill="#ffffff" /></Poi>
        <Poi x={2501} y={1281}><path d="M-20,-5 L0,-13 L20,-5 L0,3 Z M-11,2 V12 Q0,20 11,12 V2" fill="#ffffff" strokeWidth="2" /></Poi>
        <Poi x={1465} y={678} color="#9b86f5"><path d="M-17,-8 L0,-18 L17,-8 Z M-14,-8 V15 H14 V-8 Z" fill="#ffffff" strokeWidth="2" /><path d="M5,-4 H-4 V3 H5 V10 H-5" stroke="#9b86f5" strokeWidth="3" /></Poi>
        <Poi x={4881} y={900} color="#fa8383"><path d="M0,-15 V15 M-15,0 H15" strokeWidth="9" /></Poi>
        <use href="#monument" x="1278" y="1180" />
        <use href="#monument" x="2547" y="655" />
        <use href="#monument" x="2766" y="682" />
        <circle cx="1500" cy="1412" r="24" fill="#2f7fd0" />

        <TileLayer
          render={(tile) =>
            tile.labels.map(([x, y, angle, size, text, kind = "street"], i) => (
              <text
                key={i}
                transform={`translate(${x} ${y}) rotate(${angle})`}
                textAnchor="middle"
                dominantBaseline="central"
                fontSize={size}
                strokeWidth="6"
                strokeLinejoin="round"
                paintOrder="stroke"
                className={labelStyles[kind]}
              >
                {text}
              </text>
            ))
          }
        />

        {/* Zoom control cut off by the edge */}
        <g fill="#ffffff" stroke="#efe9dc" strokeWidth="4">
          <rect x="5736" y="560" width="90" height="196" rx="44" />
          <circle cx="5790" cy="845" r="52" />
        </g>

        {/* Store pin */}
        <path
          d="M3300,330 C3266,330 3240,356 3240,390 C3240,430 3272,458 3300,496 C3328,458 3360,430 3360,390 C3360,356 3334,330 3300,330 Z M3300,360 A30,30 0 1 1 3299,360 Z"
          fill="#232323"
          fillRule="evenodd"
        />
      </svg>
    </section>
  );
}

/* ------------------------------------------------------------------ */
/* Icons                                                               */
/* ------------------------------------------------------------------ */

function MailIcon({ className }: { className?: string }) {
  return (
    <svg viewBox="0 0 17 12" className={className}>
      <rect width="17" height="12" rx="1" fill="currentColor" />
      <path d="M0.5,0.5 L8.5,7.5 L16.5,0.5 M0.5,11.5 L6,5.5 M16.5,11.5 L11,5.5" fill="none" stroke="#ffffff" strokeWidth="1.1" />
    </svg>
  );
}

function BasketIcon({ className }: { className?: string }) {
  return (
    <svg viewBox="0 0 16 15" className={className}>
      <path d="M4.5,5.5 L8,1 L11.5,5.5" fill="none" stroke="currentColor" strokeWidth="1.2" />
      <path d="M0,5 H16 V7 H15 L13.8,15 H2.2 L1,7 H0 Z" fill="currentColor" />
      <path d="M5.5,8 V13 M8,8 V13 M10.5,8 V13" stroke="#ffffff" strokeWidth="1" />
    </svg>
  );
}

function InstagramIcon({ className }: { className?: string }) {
  return (
    <svg viewBox="0 0 14 14" className={className}>
      <rect x="0.5" y="1" width="13" height="12" rx="3.5" fill="currentColor" />
      <circle cx="7" cy="7" r="3" fill="#ffffff" />
      <circle cx="10.8" cy="3.4" r="0.7" fill="#ffffff" />
    </svg>
  );
}

function YoutubeIcon({ className }: { className?: string }) {
  return (
    <svg viewBox="0 0 16 12" className={className}>
      <rect width="16" height="12" rx="3" fill="currentColor" />
      <path d="M6,3.5 L11,6 L6,8.5 Z" fill="#ffffff" />
    </svg>
  );
}

function VisaCard() {
  return (
    <svg viewBox="0 0 33 24" role="img" aria-label="Visa" className="h-6 w-[33px]">
      <rect width="33" height="24" rx="1" fill="#f7f7f5" />
      <path d="M0,1 Q0,0 1,0 H32 Q33,0 33,1 V6 H0 Z" fill="#0662a9" />
      <path d="M0,17 H33 V23 Q33,24 32,24 H1 Q0,24 0,23 Z" fill="#ff9800" />
      <text x="16.5" y="15" textAnchor="middle" fontSize="8.5" fill="#0d4d94" className="font-['Open_Sans',sans-serif] font-bold italic">VISA</text>
      <path d="M7,9 L9,9 L10,12 Z" fill="#ff9800" />
    </svg>
  );
}

function CirclesCard({ label, bg, shade, left, right }: { label: string; bg: string; shade: string; left: string; right: string }) {
  return (
    <svg viewBox="0 0 33 24" role="img" aria-label={label} className="h-6 w-[33px]">
      <rect width="33" height="24" rx="1" fill={bg} />
      <path d="M0,24 L33,2 V23 Q33,24 32,24 Z" fill={shade} />
      <circle cx="20.5" cy="12" r="5" fill={right} />
      <circle cx="12.5" cy="12" r="5" fill={left} />
    </svg>
  );
}

function PaypalCard() {
  return (
    <svg viewBox="0 0 33 24" role="img" aria-label="PayPal" className="h-6 w-[33px]">
      <rect x="0.5" y="0.5" width="32" height="23" rx="1" fill="#f7f7f7" stroke="#eeeeee" />
      <text x="16.5" y="14.5" textAnchor="middle" fontSize="7.5" className="font-['Open_Sans',sans-serif] font-bold italic">
        <tspan fill="#0d3a85">Pay</tspan>
        <tspan fill="#139ad6">Pal</tspan>
      </text>
    </svg>
  );
}

/* ------------------------------------------------------------------ */
/* Page sections                                                       */
/* ------------------------------------------------------------------ */

const container = "mx-auto w-full max-w-[1110px]";

const navItems = ["TOP", "DRESSES", "BLOUSES", "T-SHIRTS", "OUTERWEAR", "WARM  CLOTHES"];

const companyLinks = [
  "Delivery",
  "Legal Notice",
  "Terms and conditions of use",
  "About us",
  "Secure payment",
  "Contact us",
  "Sitemap",
  "Stores",
];

const accountLinks = ["Addresses", "Credit slips", "Orders", "Personal info"];

const socials = [
  { name: "Facebook", icon: <FaFacebookF className="h-3.5 w-2.5" /> },
  { name: "Twitter", icon: <FaTwitter className="size-3.5" /> },
  { name: "RSS", icon: <MdRssFeed className="size-[18px]" /> },
  { name: "Google Plus", icon: <FaGooglePlusG className="size-5" /> },
  { name: "Pinterest", icon: <FaPinterest className="size-3.5" /> },
  { name: "Instagram", icon: <InstagramIcon className="size-3.5" /> },
  { name: "YouTube", icon: <YoutubeIcon className="h-3 w-4" /> },
];

function HeaderSelect({ id, label, value }: { id: string; label: string; value: string }) {
  return (
    <div className="flex items-center">
      <label htmlFor={id} className="pr-[3px]">{label}:</label>
      <select id={id} defaultValue={value} className="appearance-none bg-transparent [field-sizing:content]">
        <option>{value}</option>
      </select>
      <ChevronDown className="ml-0.5 size-2.5" strokeWidth={3} />
    </div>
  );
}

function Header() {
  return (
    <header>
      <div className="flex h-[42px] items-center justify-center gap-2.5 bg-[#060606] pb-0.5 text-[15px] text-white">
        <FaTruck className="size-4 -scale-x-100" />
        <p>
          <strong className="font-bold">Free domestic shipping</strong> on all orders over $50!
        </p>
      </div>

      <div className="border-b border-[#e8e8e8]">
        <div className={`${container} flex h-9 items-center justify-between pb-0.5 text-[13px] text-[#6d6d6d]`}>
          <div className="flex items-center gap-[29px]">
            <a href="#stores" className="flex items-center gap-1">
              <MdLocationOn className="-mx-[3px] size-[15px]" />
              Store Finder
            </a>
            <a href="#about" className="flex items-center gap-2">
              <FaAddressCard className="h-3.5 w-[17px]" />
              About Us
            </a>
            <a href="#contact" className="flex items-center gap-2">
              <MailIcon className="h-3 w-[17px]" />
              Contact Us
            </a>
            <a href="#delivery" className="flex items-center gap-2">
              <FaQuestionCircle className="size-3" />
              Delivery
            </a>
          </div>
          <div className="flex items-center gap-10">
            <HeaderSelect id="currency" label="Currency" value="USD $" />
            <HeaderSelect id="language" label="Language" value="English" />
          </div>
        </div>
      </div>

      <div className="flex h-[109px] items-center justify-center border-b border-[#e8e8e8]">
        <a href="#home" className="font-['Liberation_Serif',serif] text-[40px] leading-none font-bold tracking-wide text-[#0b0b0b]">
          TZARINA
        </a>
      </div>

      <div className={`${container} flex h-[62px] items-center justify-between text-[#6d6d6d]`}>
        <nav className="flex gap-[39px] pt-0.5 text-sm">
          {navItems.map((item) => (
            <a key={item} href="#catalog" className={item === "BLOUSES" ? "text-[#111111]" : "whitespace-pre"}>
              {item}
            </a>
          ))}
        </nav>
        <div className="flex items-center gap-7 pb-0.5 text-[13px]">
          <a href="#search" className="flex items-center gap-2">
            <FaSearch className="size-[13px]" />
            Search
          </a>
          <a href="#signin" className="flex items-center gap-2">
            <MdPerson className="-mx-[3px] size-[18px]" />
            Sign in
          </a>
          <a href="#cart" className="flex items-center gap-2">
            <BasketIcon className="h-[15px] w-4" />( 1 )
          </a>
        </div>
      </div>

      <div className="bg-[#f3f3f3]">
        <nav aria-label="Breadcrumb" className={`${container} flex h-[38px] items-center gap-[13px] pt-0.5 text-[13px]`}>
          <a href="#home" className="text-[#a5a5a5]">Home</a>
          <span>›</span>
          <span className="text-black">Contact us</span>
        </nav>
      </div>
    </header>
  );
}

const fieldClass = "w-full bg-[#f3f3f3] px-5 text-[13px] text-[#222222] placeholder:text-[#a5a5a5]";

function ContactForm() {
  return (
    <section>
      <h2 className="mb-[22px] text-[30px] leading-9 font-semibold text-black">Get in touch</h2>
      <form>
        <div className="grid grid-cols-3 gap-5">
          <input aria-label="Name" placeholder="Name" className={`${fieldClass} h-[51px]`} />
          <input aria-label="Email" type="email" placeholder="Email" className={`${fieldClass} h-[51px]`} />
          <input aria-label="Phone number" type="tel" placeholder="Phone number" className={`${fieldClass} h-[51px]`} />
        </div>
        <textarea aria-label="Message" placeholder="Message" className={`${fieldClass} mt-5 block h-[190px] resize-none py-[18px]`} />
        <button type="button" className="mt-[30px] h-[54px] w-[200px] bg-[#232323] text-[15px] font-bold text-white">
          Send message
        </button>
      </form>
    </section>
  );
}

function ContactsCard() {
  return (
    <section>
      <h2 className="mb-[22px] text-[30px] leading-9 font-semibold text-black">Contacts</h2>
      <address className="flex h-[170px] flex-col gap-3 bg-[#f3f3f3] px-[30px] py-6 text-[15px] leading-6 text-black not-italic">
        <p>
          <span className="text-[13px] leading-none text-[#a5a5a5]">Phone:</span> 8-100-9000-300
        </p>
        <p>
          <span className="text-[13px] leading-none text-[#a5a5a5]">Address:</span> United States 37472 Hood St
          <br />
          Sandy, OR 97055
        </p>
        <p>
          <span className="text-[13px] leading-none text-[#a5a5a5]">Email:</span>{" "}
          <a href="mailto:hello@plane.com" className="underline underline-offset-3">hello@plane.com</a>
        </p>
      </address>
    </section>
  );
}

function Footer() {
  return (
    <footer className="border-t border-[#e8e8e8] text-sm text-[#6d6d6d]">
      <div className={`${container} grid h-[349px] grid-cols-[285px_285px_190px_1fr] pt-[55px]`}>
        <section>
          <h3 className="text-sm font-semibold text-black">CONTACTS</h3>
          <ul className="mt-3.5 leading-[30px]">
            <li>8-100-9000-300</li>
            <li>United States</li>
            <li>Email us: hello@plane.com</li>
          </ul>
        </section>
        <section>
          <h3 className="text-sm font-semibold text-black">OUR COMPANY</h3>
          <ul className="mt-3.5 leading-[26px]">
            {companyLinks.map((link) => (
              <li key={link}>
                <a href="#company" className={link === "About us" ? "text-[#111111]" : undefined}>{link}</a>
              </li>
            ))}
          </ul>
        </section>
        <section>
          <h3 className="text-sm font-semibold text-black">YOUR ACCOUNT</h3>
          <ul className="mt-3 leading-[30px]">
            {accountLinks.map((link) => (
              <li key={link}>
                <a href="#account">{link}</a>
              </li>
            ))}
          </ul>
        </section>
        <section>
          <h3 className="text-sm font-semibold text-black">OUR NEWSLETTER</h3>
          <p className="mt-4 leading-[22px]">Register now with our newsletter and get the latest update available</p>
          <form className="mt-[34px] flex h-[47px]">
            <input
              type="email"
              aria-label="Enter your e-mail"
              placeholder="Enter your e-mail"
              className="min-w-0 flex-1 bg-[#f3f3f3] px-[17px] text-[13px] text-[#222222] placeholder:text-[#a5a5a5]"
            />
            <button type="button" aria-label="Subscribe" className="flex w-[47px] items-center justify-center bg-[#232323] text-white">
              <MdSend className="size-4" />
            </button>
          </form>
        </section>
      </div>

      <div className="border-t border-[#e8e8e8]">
        <div className={`${container} grid h-[45px] grid-cols-3 items-center pb-0.5`}>
          <div className="flex items-center gap-6 text-[#a0a0a0]">
            {socials.map(({ name, icon }) => (
              <a key={name} href="#social" aria-label={name}>{icon}</a>
            ))}
          </div>
          <p className="text-center text-[13px]">© 2018 - Ecommerce software by Shopify™</p>
          <div className="flex justify-end gap-[13px]">
            <VisaCard />
            <CirclesCard label="Mastercard" bg="#3a68cf" shade="#2f5cc2" left="#ff3d3b" right="#ffa91e" />
            <PaypalCard />
            <CirclesCard label="Maestro" bg="#1d4a93" shade="#1a4085" left="#0a9fe0" right="#ee0c25" />
          </div>
        </div>
      </div>
    </footer>
  );
}

export default function App() {
  return (
    <div className="bg-white font-[Lato,sans-serif] text-[#222222]">
      <Header />
      <StoreMap />
      <main className={`${container} grid h-[551px] grid-cols-[1fr_350px] items-start gap-[30px] pt-12`}>
        <ContactForm />
        <ContactsCard />
      </main>
      <Footer />
    </div>
  );
}
